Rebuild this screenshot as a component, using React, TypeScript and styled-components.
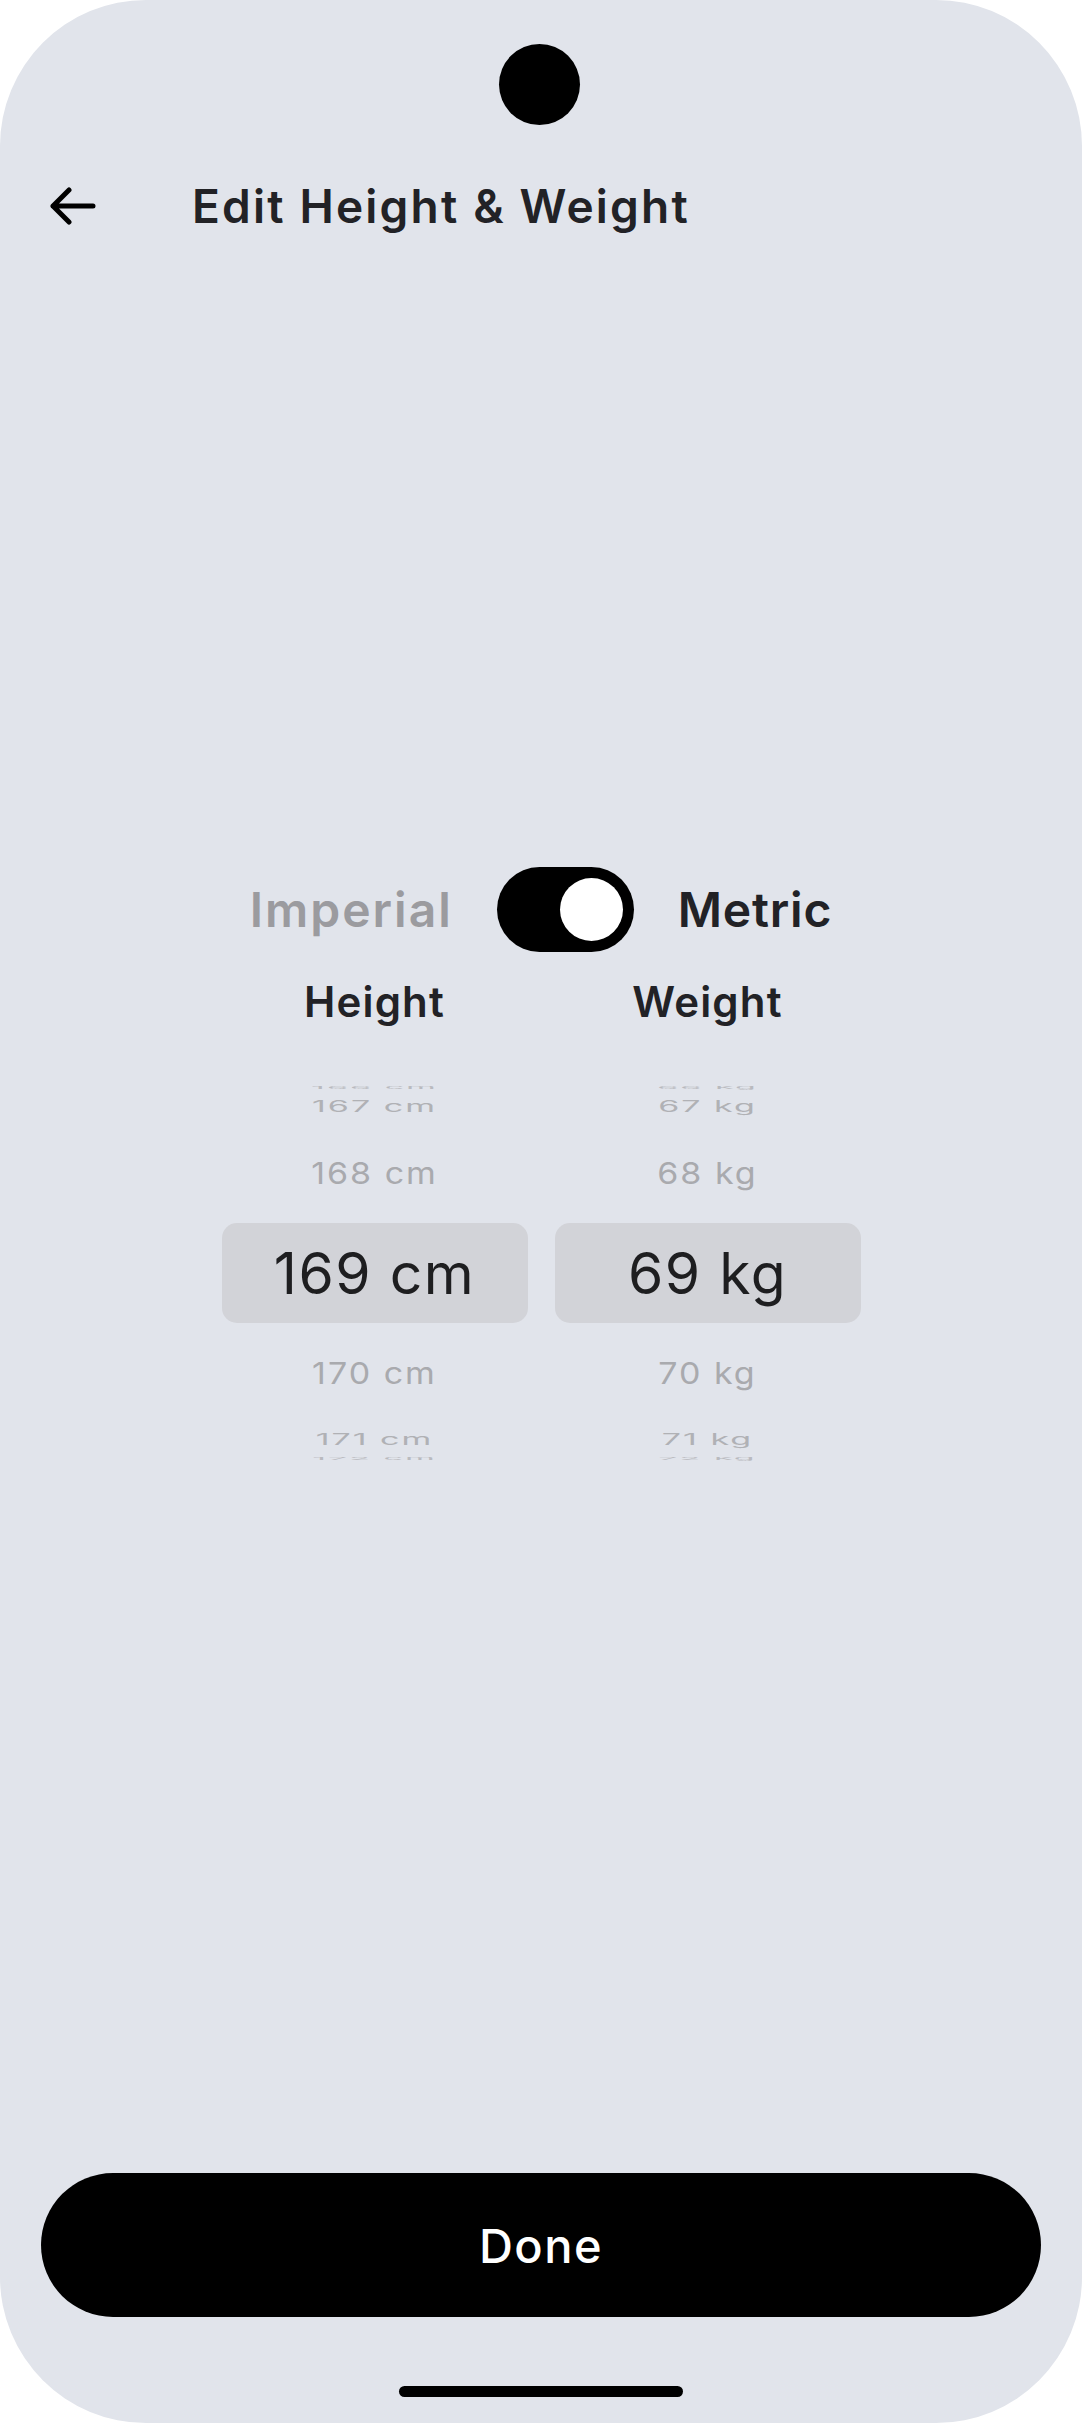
import React from 'react';
import styled, { createGlobalStyle } from 'styled-components';

const GlobalStyle = createGlobalStyle`
  html, body {
    margin: 0;
    padding: 0;
    background: #ffffff;
  }
  body {
    font-family: Inter, "Noto Sans", sans-serif;
  }
`;

interface WheelRow {
    label: string,
    height: number,
    scale: number,
    color: string
}

const heightRows: WheelRow[] = [
    { label: '166 cm', height: 5, scale: 0.12, color: '#b9babf' },
    { label: '167 cm', height: 33, scale: 0.45, color: '#b0b1b5' },
    { label: '168 cm', height: 100, scale: 0.88, color: '#a9aaae' },
];

const heightRowsBelow: WheelRow[] = [
    { label: '170 cm', height: 100, scale: 0.88, color: '#a9aaae' },
    { label: '171 cm', height: 33, scale: 0.45, color: '#b0b1b5' },
    { label: '172 cm', height: 5, scale: 0.12, color: '#b9babf' },
];

const toKg = (rows: WheelRow[]) =>
    rows.map(r => ({ ...r, label: r.label.replace(/^1(\d\d) cm$/, '$1 kg') }));

function Wheel(props: { above: WheelRow[], selected: string, below: WheelRow[] }) {
    const renderRow = (row: WheelRow) => (
        <Row key={row.label} $h={row.height}>
            <RowText $scale={row.scale} $color={row.color}>{row.label}</RowText>
        </Row>
    );
    return (
        <WheelBox>
            {props.above.map(renderRow)}
            <SelectedRow>{props.selected}</SelectedRow>
            {props.below.map(renderRow)}
        </WheelBox>
    );
}

function App() {
    return (
        <>
            <GlobalStyle />
            <Phone>
                <Camera />
                <Header>
                    <BackButton aria-label="Back">
                        <svg width="46" height="40" viewBox="0 0 46 40" fill="none">
                            <path d="M19 4 L3 20 L19 36 M3 20 H43" stroke="#000" strokeWidth="5"
                                  strokeLinecap="round" strokeLinejoin="round" />
                        </svg>
                    </BackButton>
                    <Title>Edit Height &amp; Weight</Title>
                </Header>

                <Main>
                    <UnitRow>
                        <UnitLabel $active={false}>Imperial</UnitLabel>
                        <Switch>
                            <Knob />
                        </Switch>
                        <UnitLabel $active>Metric</UnitLabel>
                    </UnitRow>

                    <Columns>
                        <Column>
                            <ColumnTitle>Height</ColumnTitle>
                            <Wheel above={heightRows} selected="169 cm" below={heightRowsBelow} />
                        </Column>
                        <Column>
                            <ColumnTitle>Weight</ColumnTitle>
                            <Wheel above={toKg(heightRows)} selected="69 kg" below={toKg(heightRowsBelow)} />
                        </Column>
                    </Columns>
                </Main>

                <Footer>
                    <DoneButton>Done</DoneButton>
                    <HomeBar />
                </Footer>
            </Phone>
        </>
    );
}

const Phone = styled.div`
    width: 1082px;
    height: 2423px;
    box-sizing: border-box;
    background: #e1e4eb;
    border-radius: 146px;
    padding-top: 44px;
    display: flex;
    flex-direction: column;
    overflow: hidden;
`

const Camera = styled.div`
    width: 81px;
    height: 81px;
    border-radius: 50%;
    background: #000;
    align-self: center;
    margin-left: -4px;
`

const Header = styled.div`
    display: flex;
    align-items: center;
    height: 60px;
    margin-top: 51px;
    padding-left: 50px;
`

const BackButton = styled.div`
    width: 46px;
    height: 40px;
    display: flex;
`

const Title = styled.h1`
    margin: 0 0 0 96px;
    font-family: Inter, "Noto Sans", sans-serif;
    font-size: 46px;
    font-weight: 600;
    line-height: 1;
    color: #222226;
    letter-spacing: 2.2px;
`

const Main = styled.div`
    display: flex;
    flex-direction: column;
    align-items: center;
    margin-top: 631px;
`

const UnitRow = styled.div`
    display: flex;
    align-items: center;
    gap: 44px;
`

const UnitLabel = styled.span<{ $active: boolean }>`
    font-size: 48px;
    font-weight: 600;
    line-height: 1;
    letter-spacing: ${p => p.$active ? '0.8px' : '2px'};
    color: ${p => p.$active ? '#222226' : '#9b9b9f'};
`

const Switch = styled.div`
    width: 137px;
    height: 85px;
    box-sizing: border-box;
    border-radius: 43px;
    background: #000;
    display: flex;
    align-items: center;
    justify-content: flex-end;
    padding-right: 11px;
`

const Knob = styled.div`
    width: 63px;
    height: 63px;
    border-radius: 50%;
    background: #fff;
`

const Columns = styled.div`
    display: grid;
    grid-template-columns: 306px 306px;
    column-gap: 27px;
    margin-top: 29px;
`

const Column = styled.div`
    display: flex;
    flex-direction: column;
    align-items: center;
`

const ColumnTitle = styled.div`
    font-size: 42px;
    font-weight: 600;
    line-height: 1;
    letter-spacing: 1.2px;
    color: #222226;
    margin-bottom: 62px;
`

const WheelBox = styled.div`
    width: 100%;
    display: flex;
    flex-direction: column;
`

const Row = styled.div<{ $h: number }>`
    height: ${p => p.$h}px;
    display: flex;
    align-items: center;
    justify-content: center;
    overflow: hidden;
`

const RowText = styled.span<{ $scale: number, $color: string }>`
    font-size: 34px;
    line-height: 1;
    letter-spacing: 2px;
    color: ${p => p.$color};
    transform: scaleY(${p => p.$scale});
    white-space: nowrap;
`

const SelectedRow = styled.div`
    height: 100px;
    border-radius: 15px;
    background: #d2d3d8;
    display: flex;
    align-items: center;
    justify-content: center;
    font-size: 57px;
    line-height: 1;
    letter-spacing: 1.5px;
    color: #1e1e20;
`

const Footer = styled.div`
    margin-top: auto;
    display: flex;
    flex-direction: column;
    align-items: center;
    padding: 0 41px 26px;
`

const DoneButton = styled.button`
    width: 100%;
    height: 144px;
    border: none;
    border-radius: 72px;
    background: #000;
    color: #fff;
    font-family: Inter, "Noto Sans", sans-serif;
    font-size: 47px;
    font-weight: 500;
    letter-spacing: 1.5px;
    cursor: pointer;
`

const HomeBar = styled.div`
    width: 284px;
    height: 11px;
    border-radius: 6px;
    background: #000;
    margin-top: 69px;
`

export default App;
